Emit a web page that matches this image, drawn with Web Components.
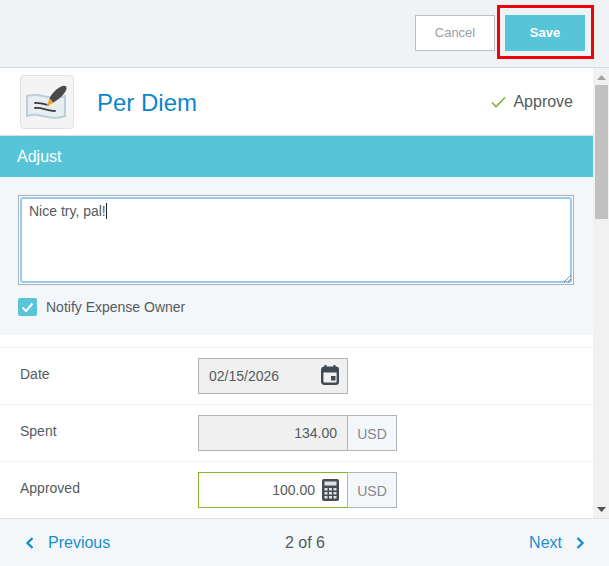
<!DOCTYPE html>
<html lang="en"><head><meta charset="utf-8"><title>Per Diem</title>
<style>
html,body{margin:0;padding:0;height:100%;overflow:hidden}
body{font-family:"Liberation Sans",Arial,sans-serif;color:#555b60;background:#fff}
</style></head><body>
<expense-app>
  <action-bar slot="top"></action-bar>
  <fake-scrollbar slot="scroll"></fake-scrollbar>
  <expense-header></expense-header>
  <adjust-panel></adjust-panel>
  <field-row label="Date">
    <date-field value="02/15/2026"></date-field>
  </field-row>
  <field-row label="Spent">
    <money-field value="134.00"></money-field>
  </field-row>
  <field-row label="Approved">
    <money-field value="100.00" editable></money-field>
  </field-row>
  <pager-bar slot="bottom"></pager-bar>
</expense-app>
<script>
function def(name, html){
  customElements.define(name, class extends HTMLElement{
    constructor(){super();this.attachShadow({mode:'open'}).innerHTML=typeof html==='function'?html(this):html}
  });
}
def('expense-app',`<style>
:host{display:flex;flex-direction:column;width:609px;height:566px;overflow:hidden}
.mid{flex:1;display:flex;min-height:0}
.content{flex:1;min-width:0;overflow:hidden}
</style>
<slot name="top"></slot>
<div class="mid"><div class="content"><slot></slot></div><slot name="scroll"></slot></div>
<slot name="bottom"></slot>`);

def('action-bar',`<style>
:host{display:flex;justify-content:flex-end;align-items:flex-start;gap:10px;padding:15px 24px 0 0;box-sizing:content-box;height:52px;background:#f0f3f6;border-bottom:1px solid #d8dadc;font-size:13px;flex:none}
button{box-sizing:border-box;width:80px;height:36px;font:inherit;padding:0 0 2px;border-radius:0;margin:0}
.c{background:#fff;border:1px solid #bcc1c4;color:#9a9ea1}
.wrap{position:relative;display:flex}
.s{background:#57c4d8;border:0;color:#fff;font-weight:700}
.hl{position:absolute;left:-8px;top:-10px;right:-9px;bottom:-8px;border:3px solid #f4000b;pointer-events:none}
</style>
<button class="c">Cancel</button>
<div class="wrap"><button class="s">Save</button><span class="hl"></span></div>`);

def('expense-header',`<style>
:host{display:flex;align-items:center;height:68px;padding:0 20px;box-sizing:border-box;border-bottom:1px solid #dcdfe1}
.tile{box-sizing:border-box;width:54px;height:54px;background:#f4f4f4;border:1px solid #e2e3e4;border-radius:4px;flex:none;display:flex}
h1{margin:0 0 0 23px;padding-top:2px;font-size:24px;font-weight:400;color:#0b87c9;flex:1}
.ap{display:flex;align-items:center;gap:7px;font-size:16px;color:#555b60}
</style>
<div class="tile"><svg width="52" height="52" viewBox="0 0 52 52">
<path d="M6 20c7-2 12-1 18 .5s13 2.500 20-.5v20c-7 3-14 2-20 .5s-11-3-18-.5z" fill="#e7eef2" stroke="#bccfd8" stroke-width="2"/>
<path d="M14 27c4-.5 9 1 13 2M14 32c6-1 13 3 20 3" fill="none" stroke="#3c3d3f" stroke-width="1.800" stroke-linecap="round"/>
<path d="M25.500 30.500l3-8 4.500 4z" fill="#f3a51d"/>
<path d="M28.500 22.500c2-5 8-11 13-12.500 3-.8 4.500 .5 4 3-.8 4-7 10-13 13.500z" fill="#4a4a4a"/>
</svg></div>
<h1>Per Diem</h1>
<div class="ap"><svg width="15" height="12" viewBox="0 0 15 12"><path d="M1 6.500l4 4L14 1.500" fill="none" stroke="#7db23c" stroke-width="1.600"/></svg><span>Approve</span></div>`);

def('adjust-panel',`<style>
:host{display:block;background:#f4f7fa;margin-bottom:12px}
.bar{height:41px;background:#57c4d8;color:#fff;font-size:16px;line-height:41px;padding-left:17px}
.body{padding:18px 19px 18px 18px;height:122px;box-sizing:content-box}
.ta{box-sizing:border-box;height:90px;border:1px solid #a5b3b8;background:#fff;position:relative;display:block}
.in{position:absolute;inset:1px;border:2px solid #98cbf1;border-radius:3px;padding:3px 0 0 7px;font-size:14px;line-height:18px;color:#555b60;box-sizing:border-box}
.caret{display:inline-block;width:1px;height:16px;background:#222;vertical-align:-3px}
.grip{position:absolute;right:1px;bottom:1px}
.chk{display:flex;align-items:center;margin-top:13px;gap:9px;font-size:14px}
.box{width:19px;height:18px;background:#57c4d8;border-radius:2px;display:flex;align-items:center;justify-content:center}
</style>
<div class="bar">Adjust</div>
<div class="body">
<div class="ta"><div class="in">Nice try, pal!<span class="caret"></span></div>
<svg class="grip" width="9" height="9" viewBox="0 0 9 9"><path d="M1 8L8 1M5 8l3-3" stroke="#444" stroke-width="1" stroke-dasharray="1 .6" fill="none"/></svg></div>
<div class="chk"><span class="box"><svg width="13" height="11" viewBox="0 0 13 11"><path d="M1.500 5.500l3.500 3.500 6.500-7.500" fill="none" stroke="#fff" stroke-width="2"/></svg></span><span>Notify Expense Owner</span></div>
</div>`);

def('field-row',el=>`<style>
:host{display:flex;align-items:center;height:56px;border-top:1px solid #f1f3f5;padding:0 0 0 20px;font-size:14px}
.l{width:178px;flex:none;position:relative;top:-2px}
</style><span class="l">${el.getAttribute('label')}</span><slot></slot>`);

def('date-field',el=>`<style>
:host{display:flex;align-items:center;box-sizing:border-box;width:150px;height:36px;background:#f0f0f0;border:1px solid #b2b5b7;padding:0 8px 0 10px;font-size:14px;color:#555b60}
span{flex:1}
svg{position:relative;top:-1px}
</style><span>${el.getAttribute('value')}</span>
<svg width="18" height="20" viewBox="0 0 18 20"><path d="M4.500 0v3M13.500 0v3" stroke="#3f4a52" stroke-width="2"/><rect x="1.200" y="2.700" width="15.600" height="16.100" rx="2" fill="none" stroke="#3f4a52" stroke-width="2.400"/><rect x="1" y="2.500" width="16" height="5" fill="#3f4a52"/><rect x="10" y="11" width="4.500" height="4.500" fill="#3f4a52"/></svg>`);

def('money-field',el=>{
 const ed=el.hasAttribute('editable');
 return `<style>
:host{display:flex;height:36px;font-size:14px;box-sizing:border-box}
.v{box-sizing:border-box;width:150px;display:flex;align-items:center;justify-content:flex-end;gap:7px;border:1px solid ${ed?'#85b431':'#b2b5b7'};background:${ed?'#fff':'#f0f0f0'};padding-right:${ed?'8px':'10px'};color:#555b60}
.u{box-sizing:border-box;width:50px;margin-left:-1px;border:1px solid #b2b5b7;background:#f4f7fa;color:#84898d;display:flex;align-items:center;justify-content:center;padding-top:1px}
</style><div class="v"><span>${el.getAttribute('value')}</span>${ed?`<svg width="17" height="22" viewBox="0 0 17 22"><rect width="17" height="22" rx="2" fill="#444c54"/><rect x="2.500" y="2.500" width="12" height="4" fill="#dfe2e4"/><g fill="#dfe2e4"><rect x="2.500" y="9" width="3" height="2.500"/><rect x="7" y="9" width="3" height="2.500"/><rect x="11.500" y="9" width="3" height="2.500"/><rect x="2.500" y="13" width="3" height="2.500"/><rect x="7" y="13" width="3" height="2.500"/><rect x="11.500" y="13" width="3" height="2.500"/><rect x="2.500" y="17" width="3" height="2.500"/><rect x="7" y="17" width="3" height="2.500"/><rect x="11.500" y="17" width="3" height="2.500"/></g></svg>`:''}</div><div class="u">USD</div>`});

def('fake-scrollbar',`<style>
:host{display:block;width:16px;flex:none;background:#f1f1f1;position:relative}
.thumb{position:absolute;left:2px;right:1px;top:17px;height:134px;background:#c1c1c1}
svg{position:absolute;left:4px}
.a{top:7px}.b{bottom:6px}
</style>
<svg class="a" width="9" height="5" viewBox="0 0 9 5"><path d="M4.500 0L9 5H0z" fill="#a3a3a3"/></svg>
<div class="thumb"></div>
<svg class="b" width="9" height="5" viewBox="0 0 9 5"><path d="M0 0h9L4.500 5z" fill="#505050"/></svg>`);

def('pager-bar',`<style>
:host{display:grid;grid-template-columns:1fr auto 1fr;align-items:center;box-sizing:border-box;height:48px;flex:none;padding:0 24px 0 25px;background:#f4f7fa;border-top:1px solid #e0e3e6;font-size:16px}
a{color:#1a8fd0;display:flex;align-items:center;gap:14px;text-decoration:none}
.n{justify-content:flex-end}
.c{color:#555b60}
</style>
<a><svg width="9" height="12" viewBox="0 0 9 12"><path d="M7.500 1L2.500 6l5 5" fill="none" stroke="#1a8fd0" stroke-width="2.400"/></svg><span>Previous</span></a>
<span class="c">2 of 6</span>
<a class="n"><span>Next</span><svg width="9" height="12" viewBox="0 0 9 12"><path d="M1.500 1l5 5-5 5" fill="none" stroke="#1a8fd0" stroke-width="2.400"/></svg></a>`);
</script>
</body></html>
